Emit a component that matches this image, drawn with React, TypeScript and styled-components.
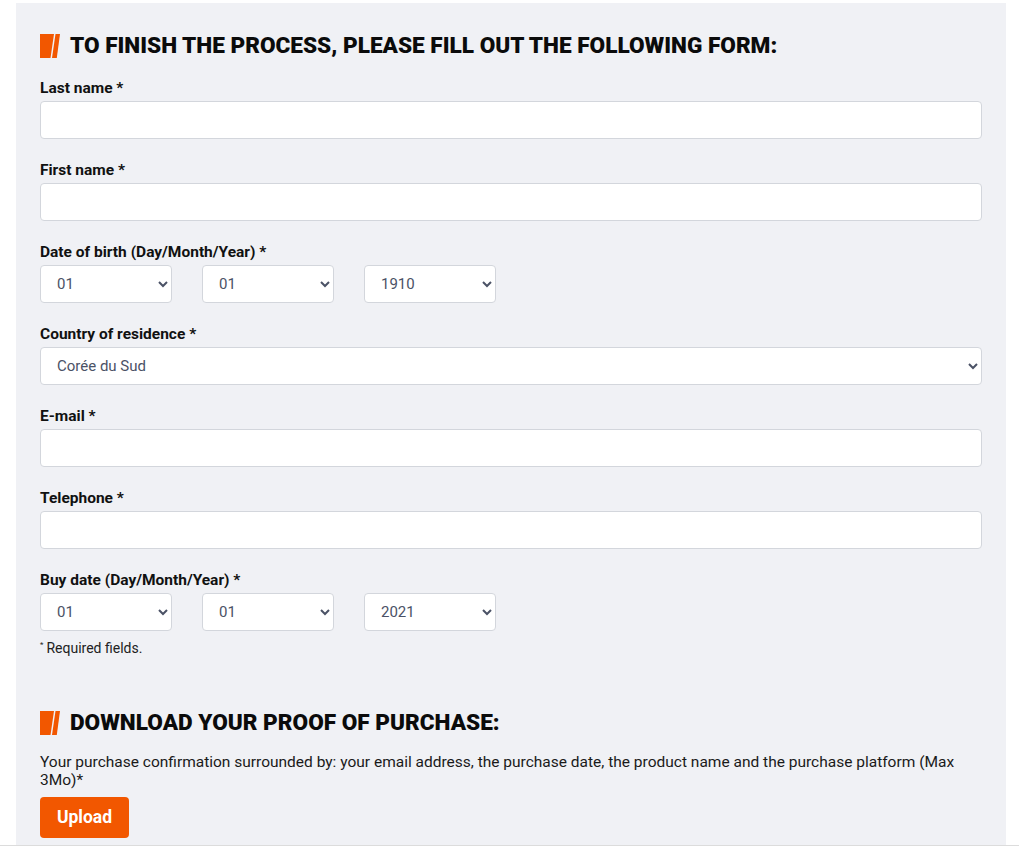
import React from "react";
import styled, { createGlobalStyle } from "styled-components";

const GlobalStyle = createGlobalStyle`
  body {
    margin: 0;
    background: #ffffff;
    font-family: Roboto, "Liberation Sans", sans-serif;
    color: #111111;
  }
`;

/*
  Styled Components
*/

const Page = styled.div`
  padding: 3px 13px 0 16px;
  border-bottom: 1px solid #dcdcdc;
`;

const Panel = styled.div`
  background-color: #f0f1f5;
  padding: 31px 24px 7px 24px;
  display: flex;
  flex-direction: column;
`;

const Heading = styled.h2<{ $top?: number }>`
  display: flex;
  align-items: center;
  gap: 10px;
  margin: ${(p) => p.$top ?? 0}px 0 0 0;
  font-family: Roboto, "Liberation Sans", sans-serif;
  font-weight: 900;
  font-size: 22.6px;
  line-height: 24px;
  text-transform: uppercase;
  color: #0b0b0b;
`;

const Field = styled.div`
  display: flex;
  flex-direction: column;
  gap: 4px;
  margin-top: 22px;

  &:first-of-type {
    margin-top: 21px;
  }
`;

const Label = styled.label`
  font-size: 15.5px;
  font-weight: 700;
  line-height: 18px;
`;

const TextInput = styled.input`
  box-sizing: border-box;
  width: 100%;
  height: 38px;
  border: 1px solid #d3d6dc;
  border-radius: 4px;
  background: #ffffff;
  padding: 0 16px;
  font-family: inherit;
  font-size: 15px;
`;

const Select = styled.select<{ $wide?: boolean }>`
  box-sizing: border-box;
  width: ${(p) => (p.$wide ? "100%" : "132px")};
  height: 38px;
  border: 1px solid #d3d6dc;
  border-radius: 4px;
  background: #ffffff;
  padding: 0 4px 0 12px;
  font-family: inherit;
  font-size: 15px;
  color: #4b5266;
`;

const DateRow = styled.div`
  display: flex;
  gap: 30px;
`;

const Note = styled.p`
  margin: 6px 0 0 0;
  font-size: 14px;
  line-height: 16px;
  color: #222222;

  sup {
    font-size: 8px;
    margin-right: 3px;
  }
`;

const Text = styled.p`
  margin: 18px 0 0 0;
  font-size: 15.5px;
  line-height: 18px;
  color: #1a1a1a;
`;

const UploadButton = styled.button`
  align-self: flex-start;
  margin-top: 8px;
  width: 89px;
  height: 41px;
  border: none;
  border-radius: 4px;
  background-color: #f25700;
  color: #ffffff;
  font-family: inherit;
  font-weight: 700;
  font-size: 17.5px;
  cursor: pointer;
`;

function Slashes() {
  return (
    <svg width="20" height="24" viewBox="0 0 20 24">
      <polygon points="0,0 14,0 10.5,24 0,24" fill="#f25700" />
      <polygon points="15.5,0 20,0 16.8,24 12,24" fill="#f25700" />
    </svg>
  );
}

const pad = (n: number) => String(n).padStart(2, "0");
const days = Array.from({ length: 31 }, (_, i) => pad(i + 1));
const months = Array.from({ length: 12 }, (_, i) => pad(i + 1));
const years = Array.from({ length: 112 }, (_, i) => String(1910 + i));

function DateSelect({ year }: { year: string }) {
  return (
    <DateRow>
      <Select defaultValue="01">
        {days.map((d) => (
          <option key={d}>{d}</option>
        ))}
      </Select>
      <Select defaultValue="01">
        {months.map((m) => (
          <option key={m}>{m}</option>
        ))}
      </Select>
      <Select defaultValue={year}>
        {years.map((y) => (
          <option key={y}>{y}</option>
        ))}
      </Select>
    </DateRow>
  );
}

function App() {
  return (
    <>
      <GlobalStyle />
      <Page>
        <Panel>
          <Heading>
            <Slashes />
            To finish the process, please fill out the following form:
          </Heading>

          <Field>
            <Label>Last name *</Label>
            <TextInput type="text" />
          </Field>
          <Field>
            <Label>First name *</Label>
            <TextInput type="text" />
          </Field>
          <Field>
            <Label>Date of birth (Day/Month/Year) *</Label>
            <DateSelect year="1910" />
          </Field>
          <Field>
            <Label>Country of residence *</Label>
            <Select $wide defaultValue="Corée du Sud">
              <option>France</option>
              <option>Corée du Sud</option>
              <option>Japon</option>
            </Select>
          </Field>
          <Field>
            <Label>E-mail *</Label>
            <TextInput type="email" />
          </Field>
          <Field>
            <Label>Telephone *</Label>
            <TextInput type="tel" />
          </Field>
          <Field>
            <Label>Buy date (Day/Month/Year) *</Label>
            <DateSelect year="2021" />
          </Field>
          <Note>
            <sup>*</sup>Required fields.
          </Note>

          <Heading $top={55}>
            <Slashes />
            Download your proof of purchase:
          </Heading>
          <Text>
            Your purchase confirmation surrounded by: your email address, the
            purchase date, the product name and the purchase platform (Max
            3Mo)*
          </Text>
          <UploadButton>Upload</UploadButton>
        </Panel>
      </Page>
    </>
  );
}

export default App;
